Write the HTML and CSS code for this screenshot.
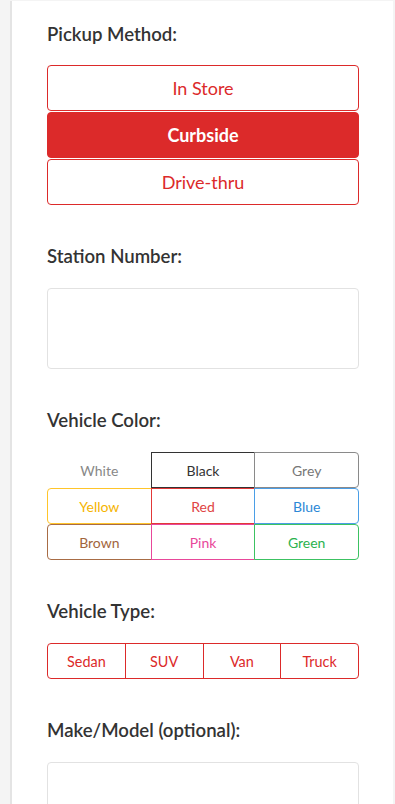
FILE: index.html
```html
<!DOCTYPE html>
<html lang="en">
<head>
    <meta charset="UTF-8">
    <meta name="viewport" content="width=device-width, initial-scale=1.0">
    <title>Pickup Details</title>
    <link rel="stylesheet" href="styles.css">
</head>
<body>
    <div class="panel">
        <div class="field">
          <div class="label first">Pickup Method:</div>
          <div class="methods">
            <button class="method">In Store</button>
            <button class="method active">Curbside</button>
            <button class="method">Drive-thru</button>
          </div>
        </div>

        <div class="field">
          <div class="label">Station Number:</div>
          <input class="text-input" type="text">
        </div>

        <div class="field">
          <div class="label">Vehicle Color:</div>
          <div class="colors">
            <div class="row">
              <button class="cell white">White</button>
              <button class="cell black">Black</button>
              <button class="cell grey">Grey</button>
            </div>
            <div class="row">
              <button class="cell yellow">Yellow</button>
              <button class="cell red">Red</button>
              <button class="cell blue">Blue</button>
            </div>
            <div class="row">
              <button class="cell brown">Brown</button>
              <button class="cell pink">Pink</button>
              <button class="cell green">Green</button>
            </div>
          </div>
        </div>

        <div class="field">
          <div class="label">Vehicle Type:</div>
          <div class="row types">
            <button class="cell type">Sedan</button>
            <button class="cell type">SUV</button>
            <button class="cell type">Van</button>
            <button class="cell type">Truck</button>
          </div>
        </div>

        <div class="field">
          <div class="label">Make/Model (optional):</div>
          <input class="text-input" type="text">
        </div>
    </div>
</body>
</html>
```

FILE: styles.css
```css
body {
  margin: 0;
  padding: 1px 2px 0 10px;
  background-color: #f4f4f4;
  font-family: "Lato", "Liberation Sans", sans-serif;
  color: #333;
}

.panel {
  background-color: #fff;
  border-left: 2px solid #e4e4e4;
  padding: 22px 34px 40px 35px;
  min-height: 900px;
}

.field {
  margin-bottom: 40px;
}

.label {
  font-size: 18.6px;
  font-weight: 600;
  line-height: 22px;
  margin-bottom: 21px;
  color: #333;
}

.label.first {
  margin-bottom: 20px;
}

button {
  font-family: inherit;
  cursor: pointer;
  background-color: #fff;
  padding: 0;
}

.methods {
  display: flex;
  flex-direction: column;
  gap: 1px;
}

.method {
  height: 46px;
  border: 1px solid #dc2a2a;
  border-radius: 4px;
  color: #dc2a2a;
  font-size: 18px;
}

.method.active {
  background-color: #dc2a2a;
  color: #fff;
  font-weight: 700;
}

.text-input {
  display: block;
  box-sizing: border-box;
  width: 100%;
  height: 81px;
  border: 1px solid #e2e2e2;
  border-radius: 4px;
  font-family: inherit;
  font-size: 16px;
  padding: 0 12px;
}

.row {
  display: flex;
}

.cell {
  flex: 1;
  box-sizing: border-box;
  height: 36px;
  border: 1px solid #ccc;
  border-radius: 0;
  font-size: 14px;
}

.cell + .cell {
  margin-left: -1px;
}

.cell:first-child {
  border-radius: 4px 0 0 4px;
}

.cell:last-child {
  border-radius: 0 4px 4px 0;
}

.white { border-color: #fff; color: #888; }
.black { border-color: #333; color: #333; }
.grey { border-color: #8a8a8a; color: #777; }
.yellow { border-color: #ffc52a; color: #f5b400; }
.red { border-color: #e23838; color: #e04444; }
.blue { border-color: #4b9ee6; color: #2c88d6; }
.brown { border-color: #a86c45; color: #a2653c; }
.pink { border-color: #e8479a; color: #e8479a; }
.green { border-color: #3cc262; color: #2bb24e; }

.type {
  border-color: #dc2a2a;
  color: #dc2a2a;
  font-size: 14.4px;
}
```
